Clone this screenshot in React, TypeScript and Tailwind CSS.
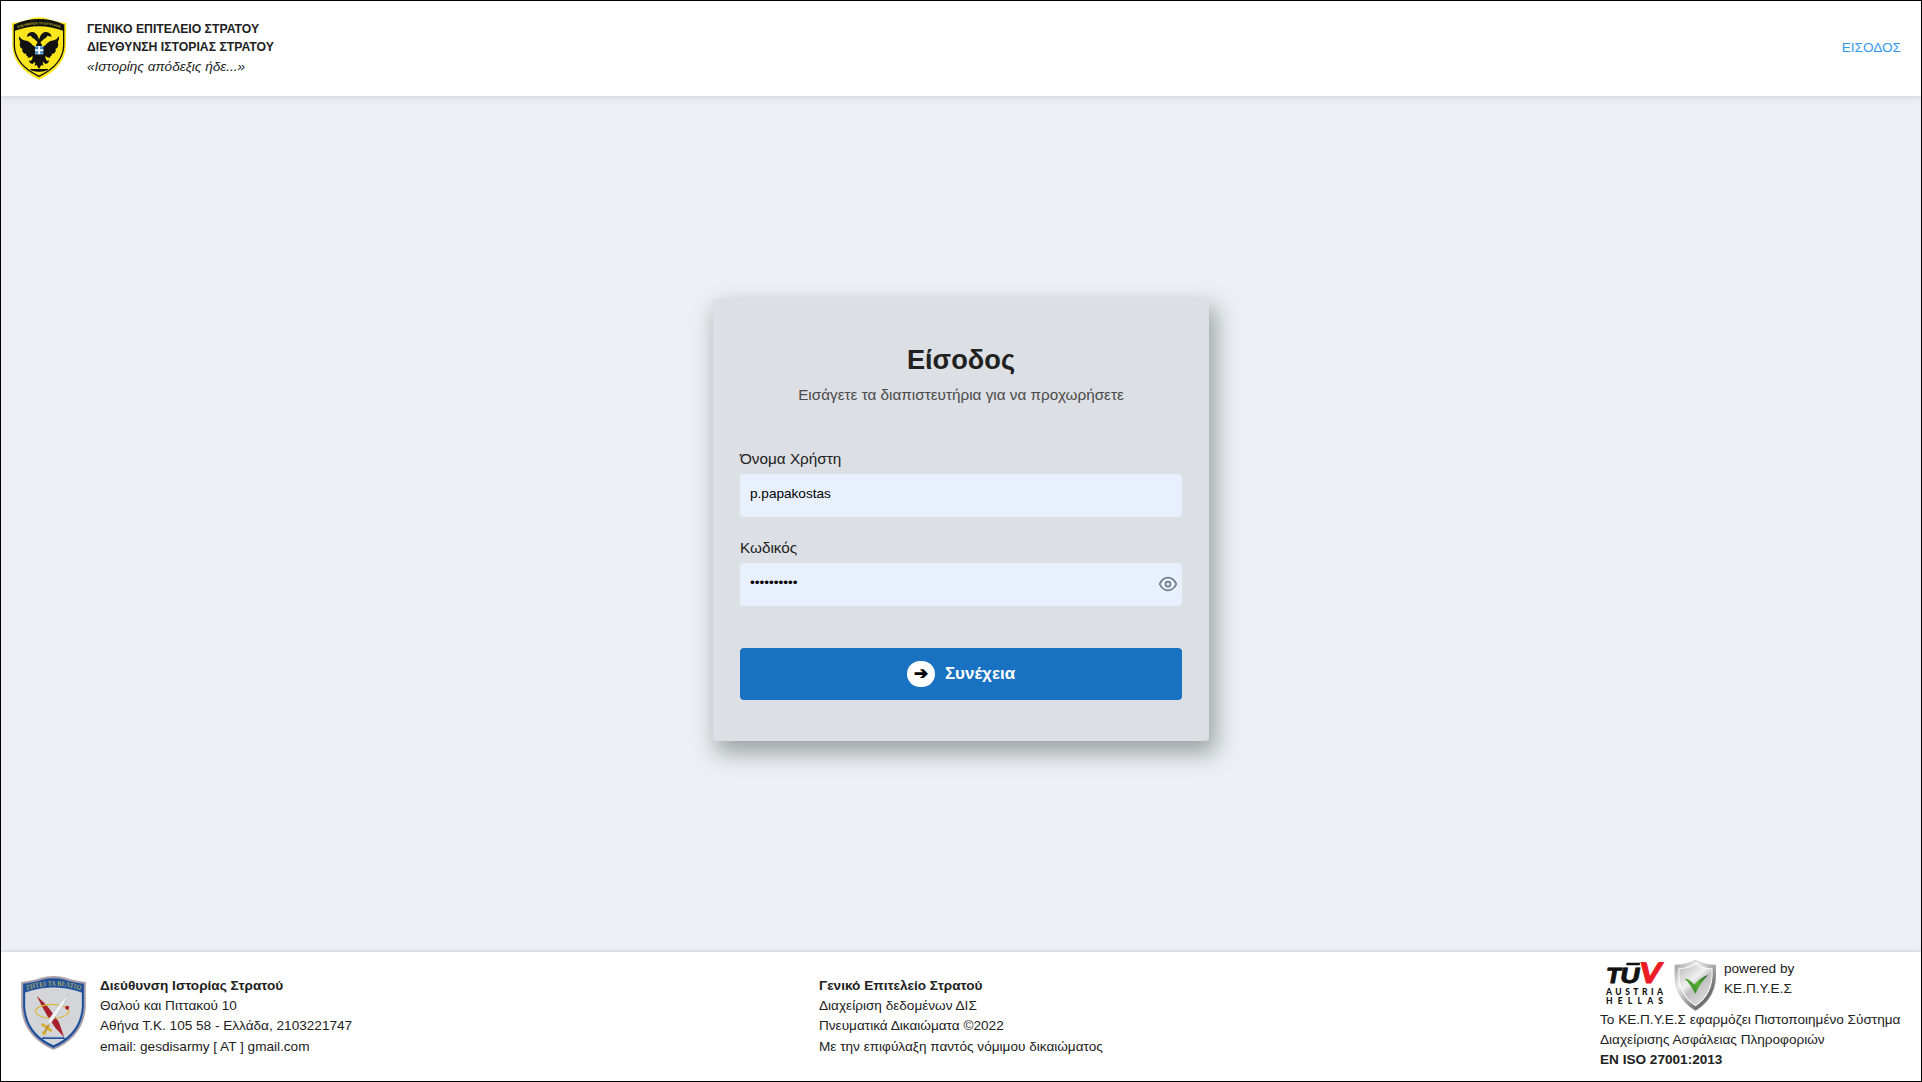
import React from "react";

function ArmyCrest() {
  return (
    <svg className="h-16 w-[56px] shrink-0" viewBox="33 20 168 192" aria-hidden="true">
      <path d="M36 38Q75 34 95 24Q117 18 139 24Q160 34 199 38L198 110Q194 172 117 208Q41 172 37 110Z" fill="#fbe51c" />
      <path d="M43 44Q117 12 191 44V108Q188 164 117 198Q46 164 43 108Z" fill="#fbe51c" stroke="#111" strokeWidth="4" />
      <path d="M43 44Q117 12 191 44V62Q117 33 43 62Z" fill="#111" />
      <path id="army-motto" d="M53 54Q117 30 183 54" fill="none" />
      <text fill="#b8a922" fontFamily="Liberation Sans" fontWeight="700" fontSize="10">
        <textPath href="#army-motto" textLength="130">ΕΛΕΥΘΕΡΟΝ ΤΟ ΕΥΨΥΧΟΝ</textPath>
      </text>
      <path
        d="M117 104Q112 92 103 86Q94 81 93 76L80 79L84 70Q92 62 102 66Q113 72 117 88Q121 72 132 66Q142 62 151 70L155 79L142 76Q141 81 132 86Q123 92 117 104Z"
        fill="#111"
      />
      <path
        d="M110 112Q96 106 92 98Q84 90 72 90Q62 86 57 78Q55 88 61 96Q58 98 60 108Q61 114 68 116Q64 120 70 127Q72 131 79 130Q77 137 84 138Q80 143 88 142Q94 140 98 136Q99 146 92 152L86 150L90 158L97 161L106 154L104 166L110 164L117 176L124 164L130 166L128 154L137 161L144 158L148 150L142 152Q135 146 136 136Q140 140 146 142Q154 143 150 138Q157 137 155 130Q162 131 164 127Q170 120 166 116Q173 114 174 108Q176 98 173 96Q179 88 177 78Q172 86 162 90Q150 90 142 98Q138 106 124 112Z"
        fill="#111"
      />
      <path d="M117 90L108 104V116H126V104Z" fill="#111" />
      <path d="M91 176H144V179Q130 185 117 184Q104 185 91 179Z" fill="#111" />
      <rect x="105" y="107" width="25" height="25" fill="#2f7fc4" />
      <path d="M117.500 107V132M105 119.500H130" stroke="#fff" strokeWidth="6" />
      <path d="M105 109H130M105 130H130" stroke="#cfe3f5" strokeWidth="2" />
    </svg>
  );
}

function HistoryCrest() {
  return (
    <svg className="h-[74px] w-[65px] shrink-0" viewBox="33 20 194 222" aria-hidden="true">
      <path d="M33 38Q68 34 92 25Q130 15 168 25Q192 34 227 38V112Q222 202 130 242Q38 202 33 112Z" fill="#a99fab" />
      <path d="M39 43Q75 38 96 31Q130 23 164 31Q185 38 221 43V112Q216 198 130 236Q44 198 39 112Z" fill="#1e4f9a" />
      <path d="M46 70Q130 40 214 70V114Q208 192 130 227Q52 192 46 114Z" fill="#d3d5d8" stroke="#e8eaee" strokeWidth="1.500" />
      <path id="history-motto" d="M50 63Q130 35 212 63" fill="none" />
      <text fill="#a3a76a" fontFamily="Liberation Serif" fontWeight="700" fontSize="21">
        <textPath href="#history-motto" textLength="164" lengthAdjust="spacingAndGlyphs">ΖΗΤΕΙ ΤΑ ΒΕΛΤΙΩ</textPath>
      </text>
      <path d="M80 80L100 99L116 116L146 158L162 204L136 176L114 144L98 116Z" fill="#a8202c" />
      <ellipse cx="126" cy="126" rx="50" ry="21" fill="none" stroke="#dcb93c" strokeWidth="3.500" />
      <path d="M175 74L160 106L121 163L112 156L151 100Z" fill="#f1f3f5" stroke="#b5b8bd" strokeWidth="1.500" />
      <path d="M97 166Q110 172 122 184" fill="none" stroke="#d3ac2c" strokeWidth="8" strokeLinecap="round" />
      <path d="M116 166L103 190" stroke="#b8922a" strokeWidth="6" />
      <circle cx="102" cy="191" r="6" fill="#d3ac2c" />
      <circle cx="171" cy="115" r="6" fill="#b01c2a" />
      <path d="M100 202H160L166 209H94Z" fill="#1e4f9a" />
      <path d="M102 203H158" stroke="#eef0f3" strokeWidth="2" />
    </svg>
  );
}

function TuvLogo() {
  return (
    <svg className="h-[49px] w-[66px] shrink-0 overflow-visible" viewBox="0 2 66 49" aria-hidden="true">
      <g transform="translate(4.500 26) skewX(-10)" fontFamily="Lato, sans-serif" fontWeight="900" fontSize="21">
        <text x="0.500" y="0" fill="#111" stroke="#111" strokeWidth="0.800" textLength="15" lengthAdjust="spacingAndGlyphs">T</text>
        <text x="14.500" y="0" fill="#111" stroke="#111" strokeWidth="0.800" textLength="20" lengthAdjust="spacingAndGlyphs">U</text>
        <path d="M18.500 -19H32" stroke="#111" strokeWidth="2.600" />
        <text x="33.500" y="0" fill="#ec1c24" stroke="#ec1c24" strokeWidth="1.200" fontSize="28" textLength="21.500" lengthAdjust="spacingAndGlyphs">V</text>
      </g>
      <g fontFamily="Lato, sans-serif" fontWeight="900" fontSize="8.500" fill="#111">
        <text x="6" y="38" textLength="57">AUSTRIA</text>
        <text x="6" y="47.300" textLength="57">HELLAS</text>
      </g>
    </svg>
  );
}

function ShieldCheck() {
  return (
    <svg className="mt-px h-[51px] w-[42px] shrink-0" viewBox="236 28 125 152" aria-hidden="true">
      <defs>
        <linearGradient id="rim" x1="0" y1="0" x2="1" y2="1">
          <stop offset="0" stopColor="#8d8d8d" />
          <stop offset="0.300" stopColor="#f2f2f2" />
          <stop offset="0.550" stopColor="#a2a2a2" />
          <stop offset="0.750" stopColor="#6b6b6b" />
          <stop offset="1" stopColor="#d8d8d8" />
        </linearGradient>
        <linearGradient id="face" x1="0" y1="0" x2="0.700" y2="1">
          <stop offset="0" stopColor="#b9b9b9" />
          <stop offset="0.450" stopColor="#f0f0f0" />
          <stop offset="0.600" stopColor="#c0c0c0" />
          <stop offset="1" stopColor="#dedede" />
        </linearGradient>
        <linearGradient id="tick" x1="0" y1="1" x2="1" y2="0">
          <stop offset="0" stopColor="#1e6b22" />
          <stop offset="0.550" stopColor="#58b230" />
          <stop offset="1" stopColor="#1c5a20" />
        </linearGradient>
      </defs>
      <path d="M300 29Q325 43 361 43Q365 95 348 130Q333 160 300 179Q267 160 252 130Q235 95 239 43Q275 43 300 29Z" fill="url(#rim)" stroke="#b8b8b8" strokeWidth="2" />
      <path d="M300 41Q323 53 349 54Q352 95 338 122Q325 148 300 164Q275 148 262 122Q248 95 251 54Q277 53 300 41Z" fill="url(#face)" stroke="#fafafa" strokeWidth="3" />
      <path d="M268 84Q282 84 296 101Q314 82 338 72Q315 95 299 129Q288 103 268 84Z" fill="url(#tick)" />
    </svg>
  );
}

function EyeIcon() {
  return (
    <svg className="mb-px h-5 w-5" viewBox="0 0 24 24" fill="none" stroke="#6f7b85" strokeWidth="2.100" strokeLinecap="round" strokeLinejoin="round" aria-hidden="true">
      <path d="M2 12C4.500 6.700 8 4.300 12 4.300S19.500 6.700 22 12C19.500 17.300 16 19.700 12 19.700S4.500 17.300 2 12Z" />
      <circle cx="12" cy="12" r="3" />
    </svg>
  );
}

function Header() {
  return (
    <header className="flex h-[95px] shrink-0 items-center justify-between bg-white pr-5 pl-[10px] shadow-[0_1px_3px_rgba(0,0,0,0.08),0_4px_8px_rgba(0,0,0,0.04)]">
      <div className="flex items-center gap-5">
        <ArmyCrest />
        <div className="text-[13.6px] leading-5">
          <p className="text-[12.24px] leading-[18px] font-bold">ΓΕΝΙΚΟ ΕΠΙΤΕΛΕΙΟ ΣΤΡΑΤΟΥ</p>
          <p className="text-[12.24px] leading-[18px] font-bold">ΔΙΕΥΘΥΝΣΗ ΙΣΤΟΡΙΑΣ ΣΤΡΑΤΟΥ</p>
          <p className="mt-px italic">«Ιστορίης απόδεξις ήδε...»</p>
        </div>
      </div>
      <a href="#login" className="pb-px text-[13.6px] leading-5 text-[#339af0]">ΕΙΣΟΔΟΣ</a>
    </header>
  );
}

function LoginCard() {
  return (
    <form
      id="login"
      className="flex h-[442px] w-[496px] flex-col rounded-[4px] bg-[#dcdfe3] px-[27px] pt-[43px] shadow-[5px_10px_22px_2px_rgba(8,16,8,0.35)]"
    >
      <h1 className="text-center text-[27.2px] leading-9 font-bold text-[#212121]">Είσοδος</h1>
      <p className="mt-[6px] text-center text-[15.3px] leading-[22px] text-[#4a4a4a]">
        Εισάγετε τα διαπιστευτήρια για να προχωρήσετε
      </p>
      <label htmlFor="username" className="mt-[42px] text-[15.3px] leading-[22px]">Όνομα Χρήστη</label>
      <input
        id="username"
        defaultValue="p.papakostas"
        className="mt-[4px] h-[43px] w-full rounded-[4px] bg-[#e8f0fe] px-[10px] pb-[4px] text-[13.6px] text-black outline-none"
      />
      <label htmlFor="password" className="mt-5 text-[15.3px] leading-[22px]">Κωδικός</label>
      <div className="mt-[4px] flex h-[43px] items-center rounded-[4px] bg-[#e8f0fe] pr-[4.5px]">
        <input
          id="password"
          type="password"
          defaultValue="0123456789"
          className="h-full min-w-0 flex-1 bg-transparent px-[10px] pb-[4px] text-[13.6px] text-black outline-none"
        />
        <EyeIcon />
      </div>
      <button type="button" className="mt-[42px] flex h-[52px] items-center justify-center gap-[10px] rounded-[4px] bg-[#1971c2] text-[17px] font-bold text-white">
        <span className="flex h-[26px] w-[28px] items-center justify-center rounded-full bg-white text-black">➔</span>
        <span>Συνέχεια</span>
      </button>
    </form>
  );
}

function Footer() {
  return (
    <footer className="flex h-[129px] shrink-0 items-center bg-white pl-5 text-[13.6px] leading-5 shadow-[0_-1px_3px_rgba(0,0,0,0.12)]">
      <div className="flex w-[798px] items-center gap-[14px]">
        <div className="pb-[7px]">
          <HistoryCrest />
        </div>
        <div>
          <p className="font-bold">Διεύθυνση Ιστορίας Στρατού</p>
          <p>Θαλού και Πιττακού 10</p>
          <p>Αθήνα Τ.Κ. 105 58 - Ελλάδα, 2103221747</p>
          <p className="mt-px">email: gesdisarmy [ AT ] gmail.com</p>
        </div>
      </div>
      <div className="w-[781px]">
        <p className="font-bold">Γενικό Επιτελείο Στρατού</p>
        <p>Διαχείριση δεδομένων ΔΙΣ</p>
        <p>Πνευματικά Δικαιώματα ©2022</p>
        <p className="mt-px">Με την επιφύλαξη παντός νόμιμου δικαιώματος</p>
      </div>
      <div className="pb-[4px] whitespace-nowrap">
        <div className="flex h-[51px] gap-[8px]">
          <div className="flex gap-[8px]">
            <TuvLogo />
            <ShieldCheck />
          </div>
          <div>
            <p>powered by</p>
            <p>ΚΕ.Π.Υ.Ε.Σ</p>
          </div>
        </div>
        <p>Το ΚΕ.Π.Υ.Ε.Σ εφαρμόζει Πιστοποιημένο Σύστημα</p>
        <p>Διαχείρισης Ασφάλειας Πληροφοριών</p>
        <p className="font-bold">EN ISO 27001:2013</p>
      </div>
    </footer>
  );
}

export default function App() {
  return (
    <div className="flex h-[1082px] w-[1922px] flex-col overflow-hidden border border-black bg-[#ecf0f5] font-['Liberation_Sans',Arial,sans-serif] text-[#212121]">
      <Header />
      <main className="flex flex-1 justify-center pt-[203px]">
        <LoginCard />
      </main>
      <Footer />
    </div>
  );
}
